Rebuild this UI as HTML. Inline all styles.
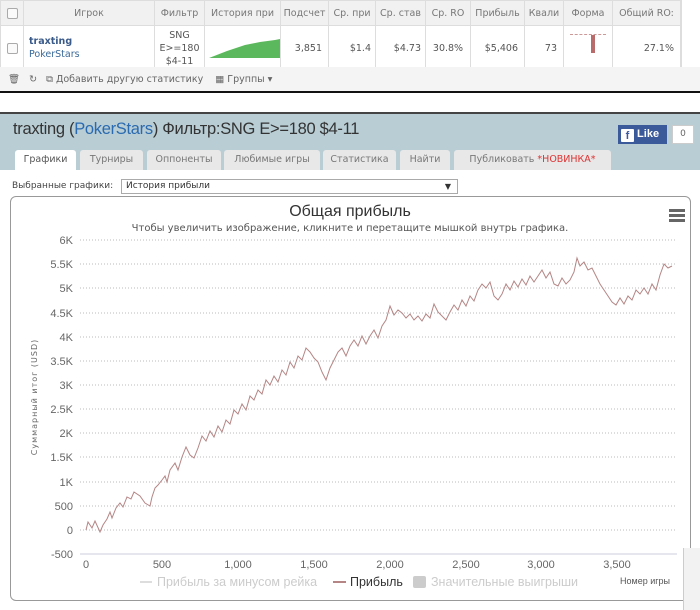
<!DOCTYPE html>
<html><head><meta charset="utf-8"><style>
*{box-sizing:border-box;margin:0;padding:0}
body{width:700px;height:610px;background:#fff;font-family:"DejaVu Sans","Liberation Sans",sans-serif;position:relative;overflow:hidden;color:#333}
.a{position:absolute}
table{border-collapse:collapse;position:absolute;left:0;top:0;font-size:9.5px}
td{border:1px solid #ddd;text-align:center;color:#666}
tr.h td{background:#f1f1f1;height:25px;color:#777}
tr.r td{height:41px;background:#fff;color:#555}
.tab{position:absolute;top:150px;height:20px;background:#e8e8e8;font-size:9.5px;color:#777;text-align:center;line-height:20px;border-radius:3px 3px 0 0}
</style></head><body>
<table>
<tr class="h"><td style="width:23px"><div style="width:11px;height:11px;border:1px solid #aaa;border-radius:2px;margin:auto;background:#fafafa"></div></td><td style="width:131px">Игрок</td><td style="width:50px">Фильтр</td><td style="width:75px">История при</td><td style="width:48px">Подсчет</td><td style="width:47px">Ср. при</td><td style="width:50px">Ср. став</td><td style="width:45px">Ср. RO</td><td style="width:54px">Прибыль</td><td style="width:39px">Квали</td><td style="width:49px">Форма</td><td style="width:68px">Общий RO:</td><td></td></tr>
<tr class="r"><td><div style="width:11px;height:11px;border:1px solid #aaa;border-radius:2px;margin:auto;background:#fafafa"></div></td><td style="text-align:left;padding-left:5px;line-height:13px"><b style="color:#3a5a8a">traxting</b><br><span style="color:#3a6a9a">PokerStars</span></td><td style="line-height:13px">SNG<br>E&gt;=180<br>$4-11</td><td style="padding:0"><svg width="75" height="41"><path d="M4 32 L22 25 L40 19 L55 16 L70 14 L75 13 L75 32 Z" fill="#5cb85c"/></svg></td><td style="text-align:right;padding-right:6px">3,851</td><td style="text-align:right;padding-right:4px">$1.4</td><td style="text-align:right;padding-right:4px">$4.73</td><td>30.8%</td><td style="text-align:right;padding-right:6px">$5,406</td><td style="text-align:right;padding-right:6px">73</td><td style="padding:0;position:relative"><div class="a" style="left:6px;top:8px;width:36px;border-top:1px dashed #c99"></div><div class="a" style="left:27px;top:9px;width:4px;height:18px;background:#b96a6a"></div></td><td style="text-align:right;padding-right:6px">27.1%</td><td></td></tr>
</table>
<div class="a" style="left:0;top:67px;width:700px;height:25px;background:#f4f4f4;font-size:9.5px;color:#666;line-height:25px;padding-left:8px">🗑&nbsp;&nbsp; ↻ &nbsp;&nbsp;⧉ Добавить другую статистику &nbsp;&nbsp; ▦ Группы ▾</div>
<div class="a" style="left:0;top:91px;width:700px;height:2px;background:#111"></div>

<div class="a" style="left:0;top:112px;width:700px;height:2px;background:#444"></div>
<div class="a" style="left:0;top:114px;width:700px;height:56px;background:#b8cdd4"></div>
<div class="a" style="left:13px;top:120px;font-family:'Liberation Sans',sans-serif;font-size:16.5px;color:#333;letter-spacing:-0.3px">traxting (<span style="color:#2a6ab0">PokerStars</span>) Фильтр:SNG E&gt;=180 $4-11</div>
<div class="a" style="left:618px;top:125px;width:49px;height:19px;background:#3b5a9a;color:#fff;font:bold 11px 'Liberation Sans',sans-serif;line-height:19px;padding-left:3px"><span style="display:inline-block;width:13px;height:13px;background:#fff;color:#3b5a9a;text-align:center;line-height:15px;vertical-align:-2px;border-radius:1px">f</span> Like</div>
<div class="a" style="left:672px;top:125px;width:22px;height:19px;background:#fff;border:1px solid #ccc;font-size:9px;color:#666;text-align:center;line-height:17px">0</div>
<div class="tab" style="left:15px;width:61px;background:#fff;color:#555">Графики</div>
<div class="tab" style="left:80px;width:63px">Турниры</div>
<div class="tab" style="left:147px;width:74px">Оппоненты</div>
<div class="tab" style="left:224px;width:96px">Любимые игры</div>
<div class="tab" style="left:323px;width:73px">Статистика</div>
<div class="tab" style="left:400px;width:50px">Найти</div>
<div class="tab" style="left:454px;width:157px">Публиковать <span style="color:#d33">*НОВИНКА*</span></div>
<div class="a" style="left:12px;top:181px;font-size:9px;color:#444">Выбранные графики:</div>
<div class="a" style="left:121px;top:179px;width:337px;height:15px;border:1px solid #aaa;font-size:9px;color:#333;line-height:13px;padding-left:4px">История прибыли<span style="position:absolute;right:6px;font-size:8px">▼</span></div>
<div class="a" style="left:10px;top:196px;width:681px;height:405px;border:1px solid #999;border-radius:6px"></div>
<div class="a" style="left:0;top:203px;width:700px;text-align:center;font-family:'Liberation Sans',sans-serif;font-size:16px;color:#333">Общая прибыль</div>
<div class="a" style="left:0;top:223px;width:700px;text-align:center;font-size:10px;color:#555">Чтобы увеличить изображение, кликните и перетащите мышкой внутрь графика.</div>
<div class="a" style="left:669px;top:209px;width:16px"><div style="height:3px;background:#666;margin-bottom:2px"></div><div style="height:3px;background:#666;margin-bottom:2px"></div><div style="height:3px;background:#666"></div></div>
<svg class="a" style="left:0;top:0" width="700" height="610">
<g stroke="#bbb" stroke-dasharray="1,2" stroke-width="1">
<line x1="80" x2="677" y1="240" y2="240"/><line x1="80" x2="677" y1="264" y2="264"/><line x1="80" x2="677" y1="288" y2="288"/><line x1="80" x2="677" y1="313" y2="313"/><line x1="80" x2="677" y1="337" y2="337"/><line x1="80" x2="677" y1="361" y2="361"/><line x1="80" x2="677" y1="385" y2="385"/><line x1="80" x2="677" y1="409" y2="409"/><line x1="80" x2="677" y1="433" y2="433"/><line x1="80" x2="677" y1="457" y2="457"/><line x1="80" x2="677" y1="482" y2="482"/><line x1="80" x2="677" y1="506" y2="506"/><line x1="80" x2="677" y1="530" y2="530"/>
</g>
<line x1="80" x2="677" y1="554" y2="554" stroke="#ccd" stroke-width="1"/>
<g font-family="Liberation Sans,sans-serif" font-size="11" fill="#666" text-anchor="end">
<text x="73" y="244">6K</text><text x="73" y="268">5.5K</text><text x="73" y="292">5K</text><text x="73" y="317">4.5K</text><text x="73" y="341">4K</text><text x="73" y="365">3.5K</text><text x="73" y="389">3K</text><text x="73" y="413">2.5K</text><text x="73" y="437">2K</text><text x="73" y="461">1.5K</text><text x="73" y="486">1K</text><text x="73" y="510">500</text><text x="73" y="534">0</text><text x="73" y="558">-500</text>
</g>
<g font-family="Liberation Sans,sans-serif" font-size="11" fill="#666" text-anchor="middle">
<text x="86" y="568">0</text><text x="162" y="568">500</text><text x="238" y="568">1,000</text><text x="314" y="568">1,500</text><text x="390" y="568">2,000</text><text x="466" y="568">2,500</text><text x="541" y="568">3,000</text><text x="617" y="568">3,500</text>
</g>
<text transform="translate(37,397) rotate(-90)" text-anchor="middle" font-size="8" fill="#666" letter-spacing="1">Суммарный итог (USD)</text>
<polyline fill="none" stroke="#b58585" stroke-width="1" points="86,530 88,522 92,528 95,521 100,532 103,525 107,519 110,512 112,518 116,508 120,503 123,507 127,497 131,499 134,492 140,496 145,503 150,506 152,497 155,488 158,485 162,480 165,476 167,482 170,470 175,463 178,470 182,457 186,447 190,455 194,458 198,448 202,436 206,441 210,431 214,437 218,426 222,432 226,420 230,424 234,410 238,414 242,404 246,410 250,396 254,400 258,390 262,394 266,380 270,385 274,376 278,382 282,370 286,375 290,362 294,368 298,356 302,360 306,348 310,352 314,358 318,362 322,372 326,380 330,368 334,360 338,352 342,348 346,356 350,346 354,340 358,346 362,336 366,344 370,336 374,330 378,338 382,326 386,320 390,306 394,315 398,310 402,313 406,318 410,314 414,320 418,316 422,321 426,314 430,318 434,304 438,312 442,316 446,320 450,312 454,305 458,310 462,300 466,306 470,296 474,301 478,290 482,284 486,288 490,282 494,296 498,300 502,294 506,284 510,290 514,281 518,287 522,279 526,285 530,276 534,282 538,276 542,270 546,278 550,272 554,284 558,286 562,278 566,284 570,280 574,272 577,258 580,266 584,262 588,270 592,268 596,276 600,284 604,290 608,296 612,302 616,305 620,298 624,304 628,296 632,300 636,290 640,294 644,288 648,294 652,284 656,290 660,275 664,264 668,268 672,266"/>
<line x1="140" x2="152" y1="582" y2="582" stroke="#ddd" stroke-width="2"/>
<text x="157" y="586" font-family="Liberation Sans,sans-serif" font-size="12.5" fill="#ccc">Прибыль за минусом рейка</text>
<line x1="333" x2="346" y1="582" y2="582" stroke="#b58585" stroke-width="2"/>
<text x="350" y="586" font-family="Liberation Sans,sans-serif" font-size="12.5" fill="#333">Прибыль</text>
<rect x="413" y="576" width="13" height="12" rx="2" fill="#ccc"/>
<text x="431" y="586" font-family="Liberation Sans,sans-serif" font-size="12.5" fill="#ccc">Значительные выигрыши</text>
<text x="620" y="584" font-family="Liberation Sans,sans-serif" font-size="9" fill="#555">Номер игры</text>
<rect x="683" y="548" width="17" height="62" fill="#f2f2f2"/><rect x="683" y="548" width="1" height="62" fill="#ccc"/>
</svg>
</body></html>
